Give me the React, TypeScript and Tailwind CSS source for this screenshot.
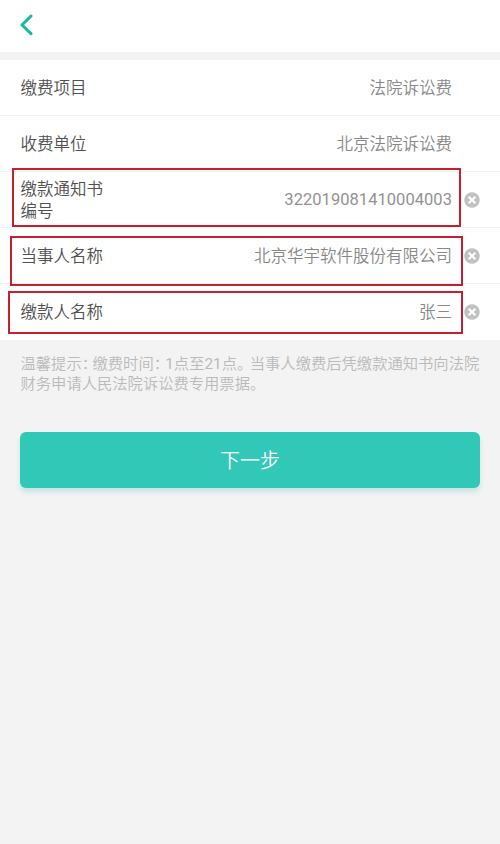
import React from 'react';

type Field = {
  label: string;
  value: string;
  clearable?: boolean;
  // outline drawn around the field, relative to its row
  frame?: string;
};

const fields: Field[] = [
  { label: '缴费项目', value: '法院诉讼费' },
  { label: '收费单位', value: '北京法院诉讼费' },
  {
    label: '缴款通知书编号',
    value: '322019081410004003',
    clearable: true,
    frame: 'left-3 right-[39px] -top-[4px] h-[59px]'
  },
  {
    label: '当事人名称',
    value: '北京华宇软件股份有限公司',
    clearable: true,
    frame: 'left-[10px] right-[37px] top-2 h-[50px]'
  },
  {
    label: '缴款人名称',
    value: '张三',
    clearable: true,
    frame: 'left-2 right-[37px] top-[7px] h-[43px]'
  }
];

const ClearIcon = () => (
  <svg className="block h-4 w-4" viewBox="0 0 16 16" fill="none">
    <circle cx="8" cy="8" r="7.8" fill="#c1c1c1" />
    <path d="M4.7 4.7l6.6 6.6M11.3 4.7l-6.6 6.6" stroke="#fff" strokeWidth="2.1" />
  </svg>
);

const FieldRow = ({ label, value, clearable, frame }: Field) => (
  <div className="relative flex h-14 items-center border-b border-[#f3f3f3] pl-[20.5px] last:border-b-0">
    <div className="w-[84px] shrink-0 pt-0.5 leading-[22px] text-[#505050]">{label}</div>
    <div className={`flex-1 text-right ${/^\d+$/.test(value) ? 'pt-0.5 font-normal tracking-[0.04px] text-[#929292]' : 'pt-[3px] text-[#888]'}`}>
      {value}
    </div>
    <div className="flex w-12 shrink-0 pl-3">
      {clearable && (
        <button type="button" aria-label="清除">
          <ClearIcon />
        </button>
      )}
    </div>
    {frame && <div className={`pointer-events-none absolute z-10 border-2 border-[#c4202f] ${frame}`} />}
  </div>
);

const App = () => {
  return (
    <div className="min-h-screen bg-[#f3f3f3] font-[Roboto,'Noto_Sans_CJK_SC',sans-serif] text-[16.5px] font-[350]">
      {/* Header */}
      <header className="flex h-[52px] items-center bg-white pl-5">
        <button type="button" aria-label="返回">
          <svg className="block h-6 w-4" viewBox="0 0 16 24" fill="none">
            <path
              d="M11 2L2 11l9 8.7"
              stroke="#18b9a4"
              strokeWidth="3"
              strokeLinecap="round"
              strokeLinejoin="round"
            />
          </svg>
        </button>
      </header>

      {/* Payment fields */}
      <main className="pt-2">
        <div className="bg-white">
          {fields.map((field) => (
            <FieldRow key={field.label} {...field} />
          ))}
        </div>

        <p className="pl-[20.5px] pt-[14px] text-[15.3px] leading-5 whitespace-nowrap text-[#bababa]">
          温馨提示<span className="tracking-[-4.5px]">：</span>缴费时间
          <span className="tracking-[-3.8px]">：</span>
          <span className="font-normal">1</span>点至<span className="font-normal">21</span>点
          <span className="tracking-[-2.5px]">。</span>
          当事人缴费后凭缴款通知书向法院
          <br />
          财务申请人民法院诉讼费专用票据。
        </p>

        <div className="px-5 pt-[38px]">
          <button
            type="button"
            className="block h-14 w-full rounded-md bg-[#32c8b7] pt-px text-xl text-white shadow-[0_4px_5px_#c5e5e2]"
          >
            下一步
          </button>
        </div>
      </main>
    </div>
  );
};

export default App;
